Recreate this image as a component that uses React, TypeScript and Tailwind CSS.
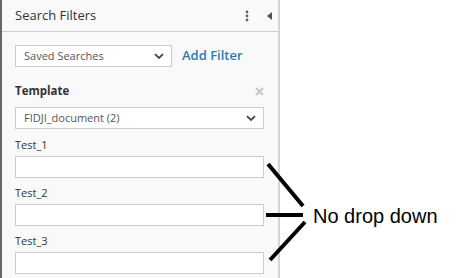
import React from "react";

const Chevron = () => (
  <svg width="10" height="7" viewBox="0 0 10 7" className="shrink-0">
    <path d="M1 1.2 L5 5 L9 1.2" fill="none" stroke="#444" strokeWidth="1.8" />
  </svg>
);

function Select({ label, className }: { label: string; className: string }) {
  return (
    <div
      className={`flex items-center justify-between border border-[#cccccc] bg-white pl-[8px] pr-[7px] text-[11px] text-[#555] ${className}`}
    >
      <span>{label}</span>
      <Chevron />
    </div>
  );
}

function Field({ label }: { label: string }) {
  return (
    <div className="flex flex-col">
      <div className="h-[22px] pt-[4px] text-[11px] leading-[14px] text-[#333]">{label}</div>
      <div className="h-[22px] border border-[#cccccc] bg-white" />
    </div>
  );
}

export default function App() {
  return (
    <div
      className="relative h-[278px] w-[462px] overflow-hidden bg-white"
      style={{ fontFamily: '"Open Sans", sans-serif' }}
    >
      <div className="flex h-full w-[280px] border-l-2 border-r-2 border-l-[#666] border-r-[#d4d4d4] bg-[#f9f9f9]">
        <div className="flex w-full flex-col">
          <div className="flex h-[32px] items-center border-b border-[#d0d0d0] pl-[13px] pr-[6px]">
            <span className="flex-1 text-[13px] text-[#333]">Search Filters</span>
            <svg width="4" height="12" viewBox="0 0 4 12" className="mr-[18px]">
              <circle cx="2" cy="2" r="1.4" fill="#666" />
              <circle cx="2" cy="6" r="1.4" fill="#666" />
              <circle cx="2" cy="10" r="1.4" fill="#666" />
            </svg>
            <svg width="5" height="8" viewBox="0 0 5 8">
              <path d="M5 0 L0 4 L5 8 Z" fill="#555" />
            </svg>
          </div>
          <div className="flex flex-col px-[13px]">
            <div className="mt-[13px] flex items-center">
              <Select label="Saved Searches" className="h-[22px] w-[157px]" />
              <span className="ml-[10px] text-[13px] font-semibold text-[#2b7bb0]">Add Filter</span>
            </div>
            <div className="mt-[16px] flex h-[16px] items-center justify-between">
              <span className="text-[11.5px] font-bold text-[#333]">Template</span>
              <svg width="9" height="9" viewBox="0 0 9 9" className="mr-[1px]">
                <path d="M1 1 L8 8 M8 1 L1 8" stroke="#c4c4c4" strokeWidth="1.8" />
              </svg>
            </div>
            <Select label="FIDJI_document (2)" className="mt-[8px] h-[22px] w-[249px]" />
            <div className="mt-[5px] flex w-[249px] flex-col gap-[4px]">
              <Field label="Test_1" />
              <Field label="Test_2" />
              <Field label="Test_3" />
            </div>
          </div>
        </div>
      </div>
      <svg className="absolute left-0 top-0" width="462" height="278" viewBox="0 0 462 278">
        <g stroke="#000" strokeWidth="4" strokeLinecap="butt" fill="none">
          <line x1="268" y1="164" x2="303" y2="206" />
          <line x1="266" y1="215" x2="303" y2="215" />
          <line x1="305" y1="222" x2="270" y2="260" />
        </g>
      </svg>
      <span
        className="absolute left-[313px] top-[204px] text-[20px] leading-[24px] text-black"
        style={{ fontFamily: '"Liberation Sans", Arial, sans-serif' }}
      >
        No drop down
      </span>
    </div>
  );
}
